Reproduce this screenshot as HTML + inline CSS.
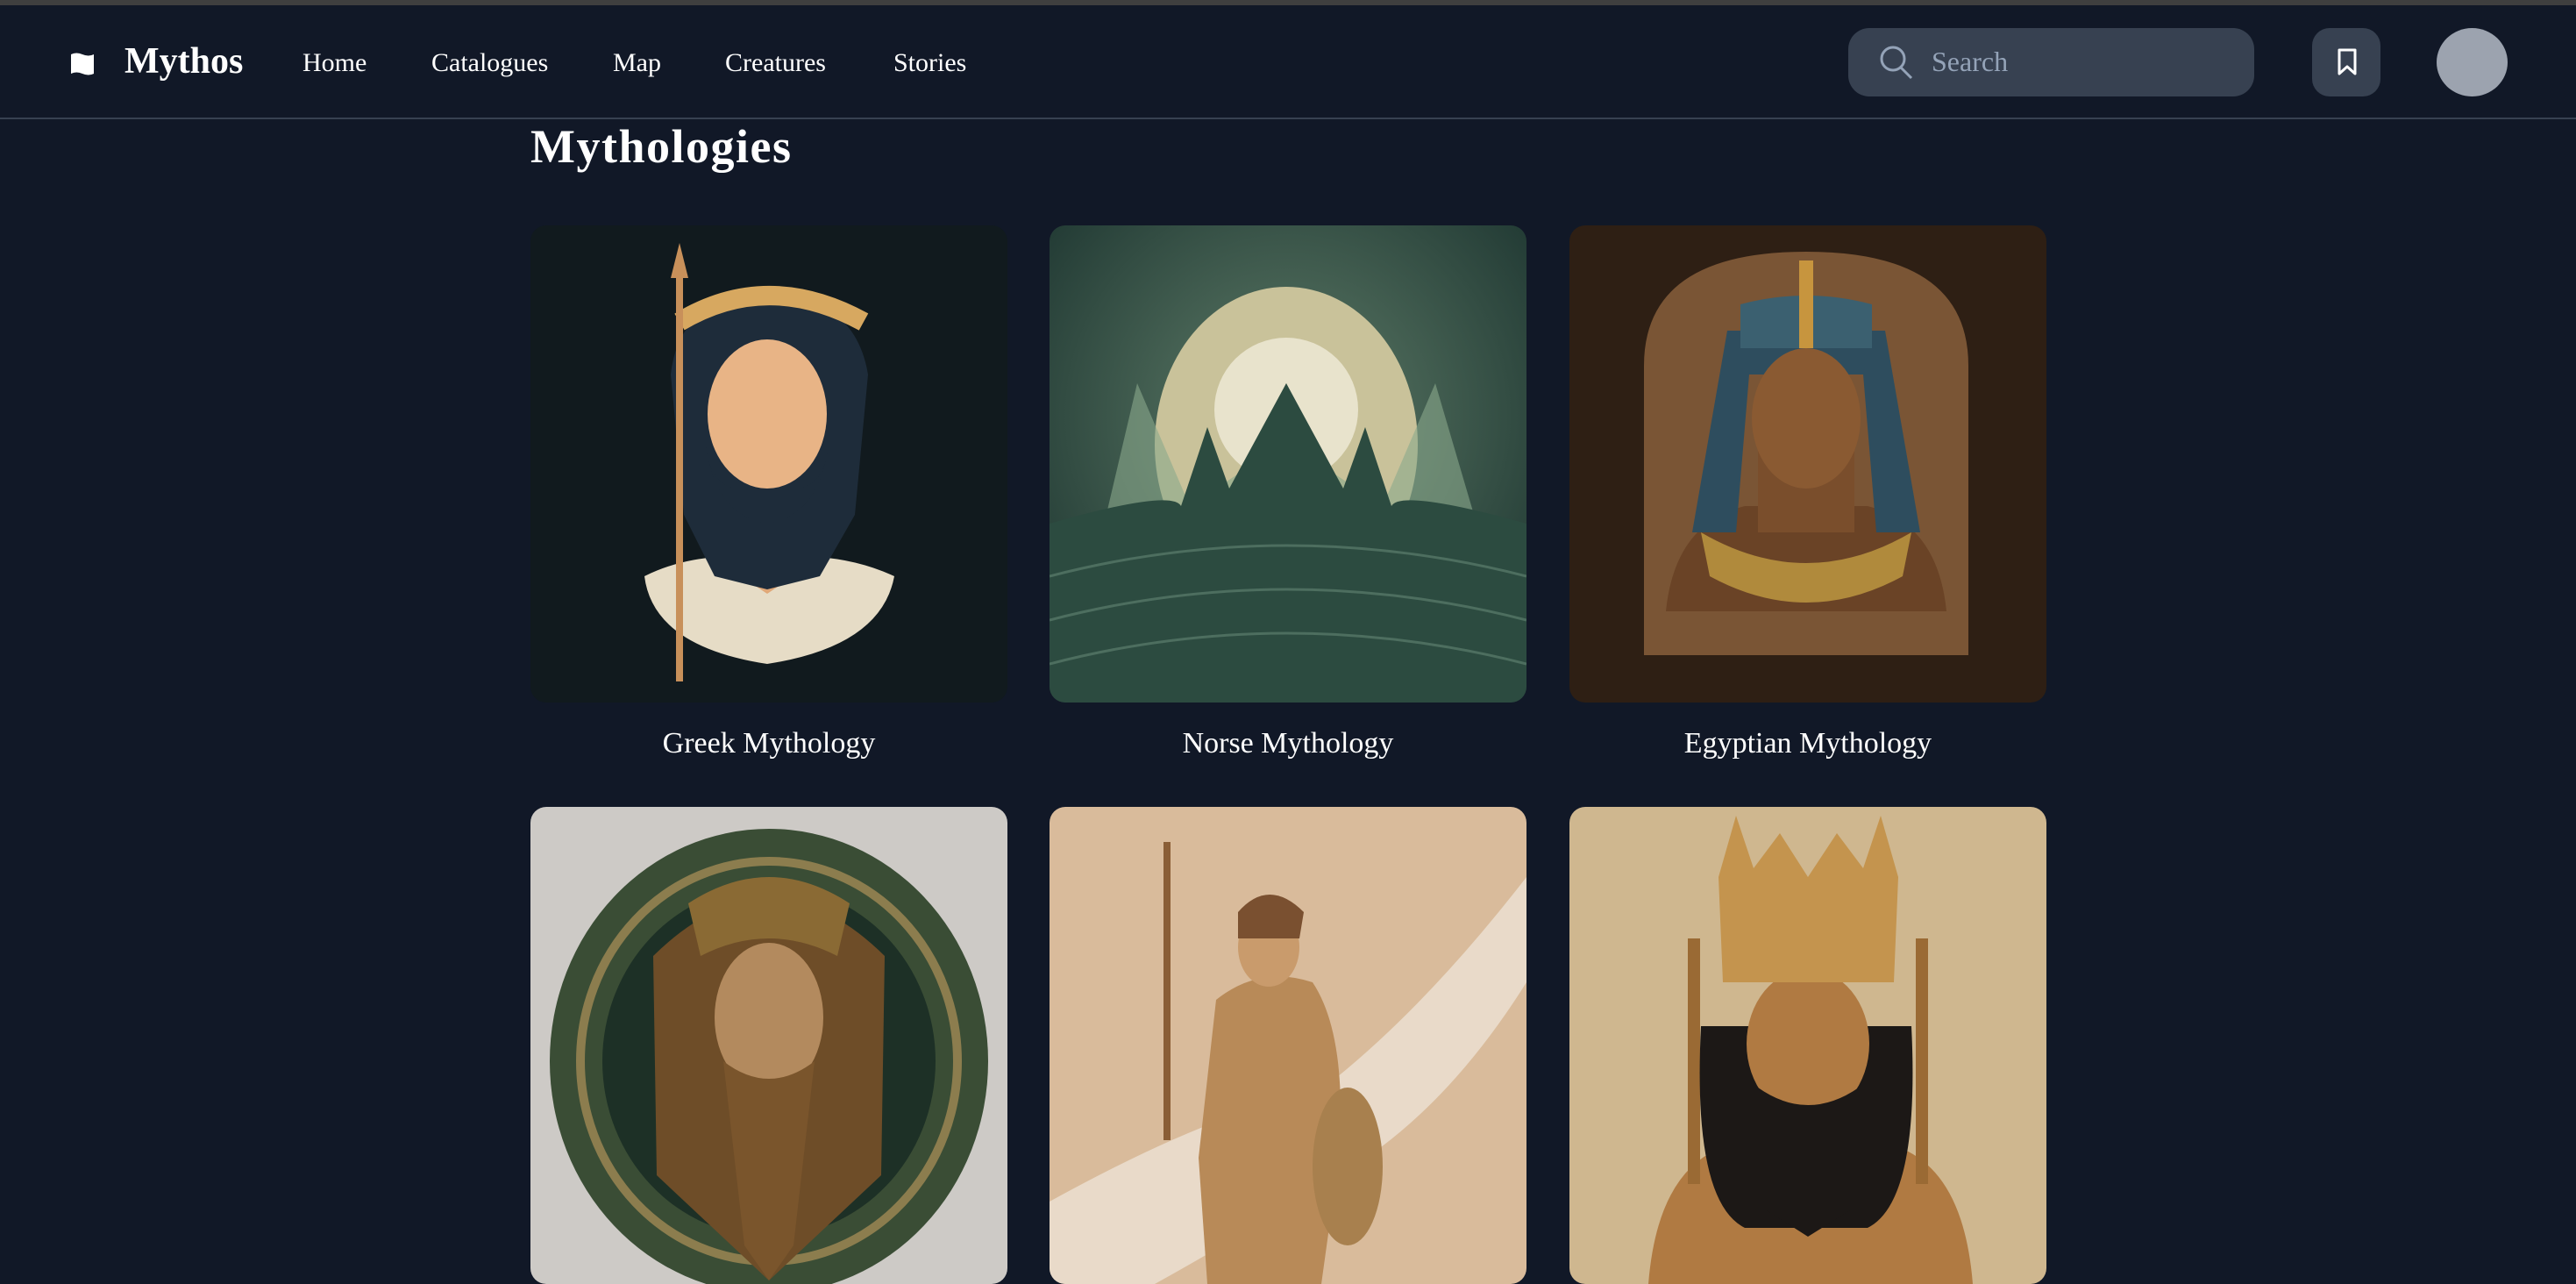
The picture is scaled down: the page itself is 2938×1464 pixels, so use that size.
<!DOCTYPE html>
<html><head><meta charset="utf-8"><style>
*{margin:0;padding:0;box-sizing:border-box}
html,body{width:2938px;height:1445px;overflow:hidden;background:#111827;font-family:"Liberation Serif",serif;color:#fff}
.top{position:absolute;left:0;top:0;width:2938px;height:6px;background:#3f3f3f}
.hdr{position:absolute;left:0;top:6px;width:2938px;height:130px;border-bottom:2px solid #374151;background:#111827}
.logo{position:absolute;left:80px;top:53px}
.brand{position:absolute;left:142px;top:40px;font-size:42px;font-weight:bold}
.nav{position:absolute;top:49px;font-size:30px}
.search{position:absolute;left:2108px;top:26px;width:463px;height:78px;border-radius:24px;background:#374151}
.search span{position:absolute;left:95px;top:20px;font-size:32px;color:#94a3b8}
.bm{position:absolute;left:2637px;top:26px;width:78px;height:78px;border-radius:20px;background:#374151}
.av{position:absolute;left:2779px;top:26px;width:81px;height:78px;border-radius:50%;background:#9ca3af}
h1{position:absolute;left:605px;top:136px;font-size:54px;font-weight:bold;letter-spacing:1.5px}
.card{position:absolute;width:544px;height:544px;border-radius:18px;overflow:hidden}
.card svg{display:block}
.lbl{position:absolute;width:544px;text-align:center;top:829px;font-size:34px}
</style></head><body>
<div class="top"></div>
<div class="hdr">
<svg class="logo" width="28" height="28" viewBox="0 0 28 28"><path d="M1 3 Q7 0 14 3 Q21 6 27 3 V25 Q21 28 14 25 Q7 22 1 25Z" fill="#fff"/></svg>
<div class="brand">Mythos</div>
<div class="nav" style="left:345px">Home</div>
<div class="nav" style="left:492px">Catalogues</div>
<div class="nav" style="left:699px">Map</div>
<div class="nav" style="left:827px">Creatures</div>
<div class="nav" style="left:1019px">Stories</div>
<div class="search"><svg style="position:absolute;left:34px;top:18px" width="42" height="42" viewBox="0 0 42 42"><circle cx="17" cy="17" r="13" fill="none" stroke="#94a3b8" stroke-width="3"/><path d="M26 27 L38 39" stroke="#94a3b8" stroke-width="3"/></svg><span>Search</span></div>
<div class="bm"><svg style="position:absolute;left:28px;top:23px" width="24" height="32" viewBox="0 0 24 32"><path d="M3 2 H21 V29 L12 21 L3 29Z" fill="none" stroke="#fff" stroke-width="3" stroke-linejoin="round"/></svg></div>
<div class="av"></div>
</div>
<h1>Mythologies</h1>

<div class="card" style="left:605px;top:257px;background:#111a1e"><svg width="544" height="544" viewBox="0 0 544 544">
<path d="M130 400 Q140 480 270 500 Q400 480 415 400 Q350 370 270 380 Q190 370 130 400Z" fill="#e6dcc6"/>
<path d="M220 280 L320 280 L315 390 L270 420 L225 390Z" fill="#e0a878"/>
<path d="M160 170 Q170 80 270 80 Q370 80 385 170 L370 330 L330 400 L270 415 L210 400 L175 330Z" fill="#1e2c3a"/>
<ellipse cx="270" cy="215" rx="68" ry="85" fill="#e8b486"/>
<path d="M200 250 Q210 330 270 340 Q330 330 340 250 Q335 300 300 300 L240 300 Q205 300 200 250Z" fill="#1e2c3a"/>
<path d="M170 110 Q270 50 380 110" fill="none" stroke="#d7a860" stroke-width="22"/>
<rect x="166" y="40" width="8" height="480" fill="#c8905a"/><path d="M170 20 L180 60 L160 60Z" fill="#c8905a"/>
</svg></div>
<div class="lbl" style="left:605px">Greek Mythology</div>

<div class="card" style="left:1197px;top:257px"><svg width="544" height="544" viewBox="0 0 544 544">
<defs><radialGradient id="ng" cx="50%" cy="40%" r="70%"><stop offset="0" stop-color="#5e7c68"/><stop offset="1" stop-color="#1d3530"/></radialGradient></defs>
<rect width="544" height="544" fill="url(#ng)"/>
<ellipse cx="270" cy="250" rx="150" ry="180" fill="#c9c29a"/>
<circle cx="270" cy="210" r="82" fill="#e8e3cc"/>
<path d="M60 350 L100 180 L160 320 L220 280 L270 180 L320 280 L380 320 L440 180 L490 350Z" fill="#8aa98c" opacity=".6"/>
<path d="M0 340 Q140 300 150 320 L180 230 L205 300 L270 180 L335 300 L360 230 L390 320 Q400 300 544 340 V544 H0Z" fill="#2c4b40"/>
<path d="M0 400 Q270 330 544 400 M0 450 Q270 380 544 450 M0 500 Q270 430 544 500" stroke="#4d6e5f" stroke-width="3" fill="none"/>
</svg></div>
<div class="lbl" style="left:1197px">Norse Mythology</div>

<div class="card" style="left:1790px;top:257px;background:#2e1f14"><svg width="544" height="544" viewBox="0 0 544 544">
<path d="M85 490 V160 Q85 30 270 30 Q455 30 455 160 V490 Z" fill="#7a5535"/>
<path d="M110 440 Q120 340 200 320 L340 320 Q420 340 430 440Z" fill="#6a4326"/>
<path d="M150 350 Q270 420 390 350 L380 400 Q270 460 160 400Z" fill="#b08a3c"/>
<rect x="215" y="240" width="110" height="110" fill="#7a4e2c"/>
<path d="M180 120 L360 120 L400 350 L350 350 L335 170 L205 170 L190 350 L140 350Z" fill="#2e4d5e"/>
<ellipse cx="270" cy="220" rx="62" ry="80" fill="#8a5a32"/>
<path d="M195 90 Q270 70 345 90 L345 140 L195 140Z" fill="#3b6070"/>
<rect x="262" y="40" width="16" height="100" fill="#c7953e"/>
</svg></div>
<div class="lbl" style="left:1790px">Egyptian Mythology</div>

<div class="card" style="left:605px;top:920px;background:#cdcac6"><svg width="544" height="544" viewBox="0 0 544 544">
<ellipse cx="272" cy="290" rx="250" ry="265" fill="#3a4d35"/>
<ellipse cx="272" cy="290" rx="215" ry="228" fill="none" stroke="#8c7d4e" stroke-width="10"/>
<ellipse cx="272" cy="290" rx="190" ry="200" fill="#1d3026"/>
<path d="M140 170 Q272 40 404 170 L400 420 L272 540 L144 420Z" fill="#6e4d28"/>
<ellipse cx="272" cy="240" rx="62" ry="85" fill="#b38a5e"/>
<path d="M220 290 Q272 330 324 290 L300 500 L272 540 L244 500Z" fill="#7a552c"/>
<path d="M180 110 Q272 50 364 110 L350 170 Q272 130 194 170Z" fill="#8a6a34"/>
</svg></div>

<div class="card" style="left:1197px;top:920px;background:#d9bb9b"><svg width="544" height="544" viewBox="0 0 544 544">
<path d="M0 450 Q200 340 300 330 Q420 240 544 80 V200 Q450 350 330 420 Q200 500 120 544 H0Z" fill="#ece2d4" opacity=".8"/>
<path d="M190 220 Q240 180 300 200 Q340 260 330 400 L310 544 L180 544 L170 400Z" fill="#b88a58"/>
<ellipse cx="250" cy="160" rx="35" ry="45" fill="#c99b6c"/>
<path d="M215 120 Q250 80 290 120 L285 150 L215 150Z" fill="#7a5030"/>
<ellipse cx="340" cy="410" rx="40" ry="90" fill="#a8804e"/>
<rect x="130" y="40" width="8" height="340" fill="#8a5e36"/>
</svg></div>

<div class="card" style="left:1790px;top:920px;background:#cfb78f"><svg width="544" height="544" viewBox="0 0 544 544">
<path d="M90 544 Q100 420 170 390 L380 390 Q450 420 460 544Z" fill="#b07a42"/>
<rect x="135" y="150" width="14" height="280" fill="#9a6a34"/><rect x="395" y="150" width="14" height="280" fill="#9a6a34"/>
<path d="M150 250 Q140 450 200 480 L340 480 Q400 450 390 250Z" fill="#1c1816"/>
<ellipse cx="272" cy="270" rx="70" ry="85" fill="#b07a42"/>
<path d="M215 320 Q272 360 330 320 L320 460 L272 490 L225 460Z" fill="#1c1816"/>
<path d="M170 80 L190 10 L210 70 L240 30 L272 80 L305 30 L335 70 L355 10 L375 80 L370 200 L175 200Z" fill="#c4944e"/>
</svg></div>
</body></html>
